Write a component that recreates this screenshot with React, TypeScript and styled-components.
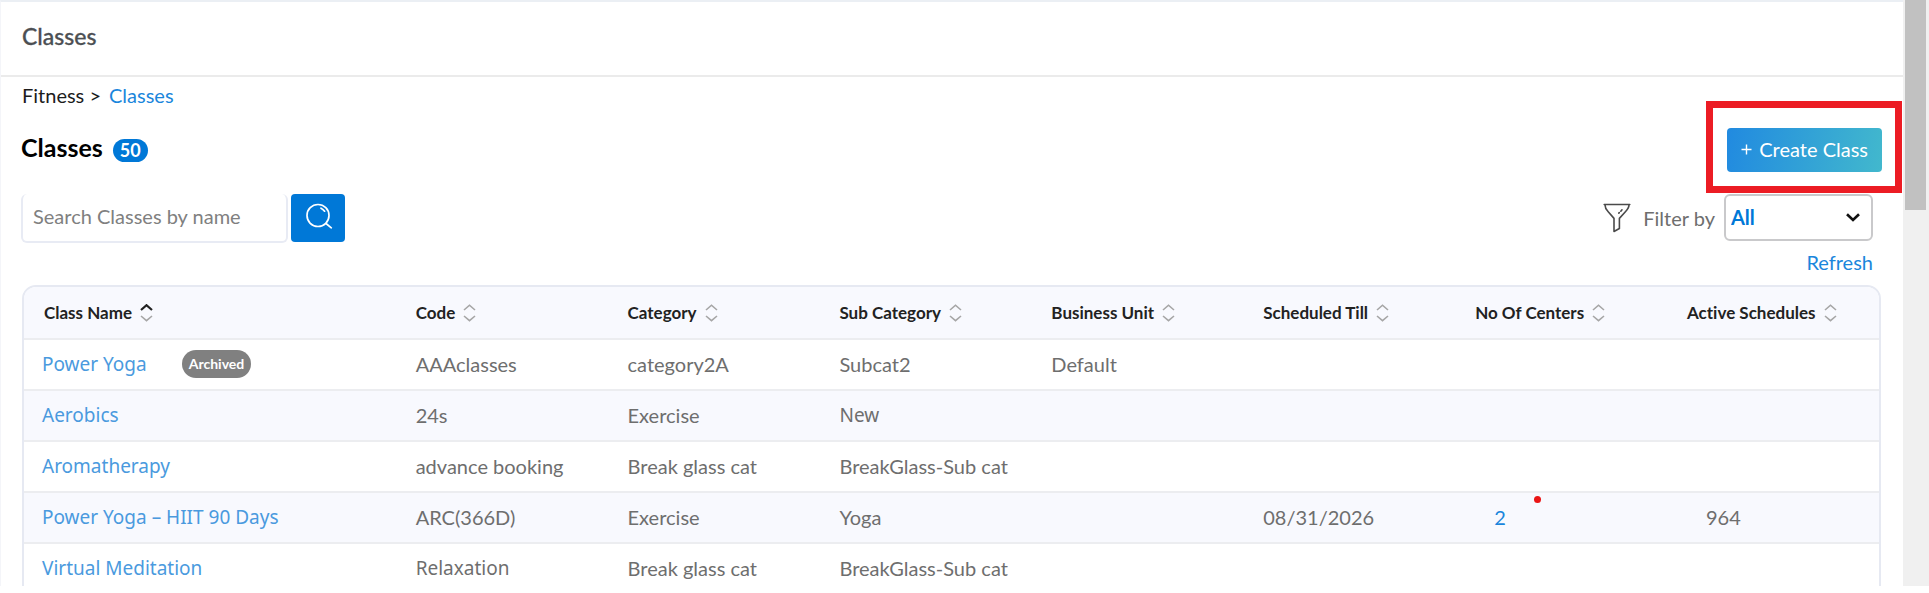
import React from "react";
import styled, { createGlobalStyle, css } from "styled-components";

const blue = "#0078d7";
const linkBlue = "#1a86dc";
const nameBlue = "#4a9ade";
const line = "#ecedf0";
const tint = "#f8f9fe";

const GlobalStyle = createGlobalStyle`
  *, *::before, *::after { box-sizing: border-box; }
  body {
    margin: 0;
    background: #fff;
    color: #6e6e6e;
    font: 20px/24px Lato, "Liberation Sans", sans-serif;
    font-variant-ligatures: none;
    overflow: hidden;
  }
  h1, p { margin: 0; }
  a { color: ${linkBlue}; text-decoration: none; }
  button, input, select { font: inherit; font-variant-ligatures: none; margin: 0; }
`;

const Shell = styled.div`
  display: flex;
  height: calc(100vh - 7px);
  overflow: hidden;
`;

const Main = styled.main`
  flex: 1;
  min-width: 0;
  border-top: 2px solid #ebeff4;
  border-left: 1px solid #f4f5f9;
`;

const ScrollTrack = styled.div`
  width: 26px;
  padding: 0 3px 0 2px;
  background: #f0f0f0;
`;

const ScrollThumb = styled.div`
  height: 210px;
  background: #c1c1c1;
`;

const TopBar = styled.header`
  display: flex;
  align-items: center;
  height: 75px;
  padding: 0 21px 6px;
  border-bottom: 2px solid #ebebeb;
`;

const TopTitle = styled.p`
  color: #4c4f53;
  font-size: 23px;
  font-weight: 500;
  -webkit-text-stroke: 0.3px currentColor;
`;

const Content = styled.div`
  padding: 6px 27px 0 20px;
`;

const Breadcrumb = styled.nav`
  display: flex;
  gap: 8px;
  padding-left: 1px;
  color: #1c1c1c;
`;

const TitleRow = styled.div`
  display: flex;
  align-items: center;
  justify-content: space-between;
  margin-top: 21px;
  height: 44px;
`;

const TitleGroup = styled.div`
  display: flex;
  align-items: center;
  gap: 10px;
  padding-bottom: 6px;
`;

const Title = styled.h1`
  color: #000;
  font-size: 25px;
  font-weight: 700;
  line-height: 30px;
`;

const Count = styled.span`
  height: 23px;
  margin-top: 6px;
  padding: 0 7px;
  border-radius: 12px;
  background: ${blue};
  color: #fff;
  font-size: 18px;
  font-weight: 700;
  line-height: 23px;
`;

const Highlight = styled.div`
  position: relative;
  margin-right: -6px;

  &::after {
    content: "";
    position: absolute;
    inset: -27px -20px -21px -21px;
    border: 7px solid #ec1c24;
    pointer-events: none;
  }
`;

const CreateButton = styled.button`
  display: flex;
  align-items: center;
  gap: 7px;
  height: 44px;
  padding: 0 14px 2px;
  border: 0;
  border-radius: 4px;
  background: linear-gradient(100deg, #218ae0, #42b8cd);
  color: #fff;
`;

const Tools = styled.div`
  display: flex;
  align-items: flex-start;
  justify-content: space-between;
  margin-top: 22px;
`;

const SearchForm = styled.form`
  display: flex;
  gap: 3px;
`;

const SearchInput = styled.input`
  width: 267px;
  height: 49px;
  padding: 0 10px 4px;
  border: 2px solid #e8ebf4;
  border-top: 0;
  border-radius: 6px;
  background: #fff;
  outline: 0;

  &::placeholder { color: #808080; opacity: 1; }
`;

const SearchButton = styled.button`
  display: grid;
  place-items: center;
  width: 54px;
  height: 48px;
  padding: 0 0 2px 2px;
  border: 0;
  border-radius: 4px;
  background: ${blue};
`;

const FilterLabel = styled.label`
  display: flex;
  align-items: center;
  gap: 9px;
  margin: 0 3px 0 0;
`;

const FilterIcon = styled.svg`
  margin-right: 3px;
`;

const SelectBox = styled.span`
  display: grid;
  align-items: center;

  > * { grid-area: 1 / 1; }
  > svg { justify-self: end; margin-right: 13px; pointer-events: none; }
`;

const Select = styled.select`
  appearance: none;
  width: 149px;
  height: 47px;
  padding: 0 5px 1px;
  border: 2px solid #c9c9cb;
  border-radius: 6px;
  background: #fff;
  color: ${blue};
  font-weight: 700;
`;

const RefreshRow = styled.div`
  display: flex;
  justify-content: flex-end;
  margin: 7px 3px 11px 0;
`;

const TableFrame = styled.div`
  margin: 0 -5px 0 1px;
  border: 2px solid #e6e9f2;
  border-radius: 14px 14px 0 0;
  overflow: hidden;
`;

const Table = styled.table`
  width: 100%;
  table-layout: fixed;
  border-collapse: separate;
  border-spacing: 0;
`;

const cell = css`
  padding: 0 0 2px 20px;
  border-bottom: 2px solid ${line};
  text-align: left;
  white-space: nowrap;
`;

const HeadCell = styled.th<{ $share: string }>`
  ${cell}
  width: ${(p) => p.$share};
  height: 53px;
  padding-bottom: 0;
  background: ${tint};
  color: #222;
  font-size: 17px;
  font-weight: 700;
`;

const SortButton = styled.button`
  display: flex;
  align-items: center;
  gap: 8px;
  padding: 0;
  border: 0;
  background: none;
  color: inherit;
`;

const Row = styled.tr`
  height: 51px;

  &:nth-child(even) { background: ${tint}; }
`;

const Cell = styled.td<{ $indent?: boolean }>`
  ${cell}
  padding-left: ${(p) => (p.$indent ? "39px" : "20px")};
`;

const NameCell = styled.td`
  ${cell}
  padding-left: 18px;
`;

const NameLine = styled.div`
  display: flex;
  align-items: center;
  gap: 35px;
`;

const NameLink = styled.a`
  color: ${nameBlue};
  font: 19px/24px "Noto Sans", sans-serif;
`;

const AltText = styled.span`
  font: 19px/24px "Noto Sans", sans-serif;
`;

const Archived = styled.span`
  height: 28px;
  padding: 0 7px;
  border-radius: 14px;
  background: #808080;
  color: #fff;
  font-size: 14px;
  font-weight: 700;
  line-height: 28px;
`;

const Marked = styled.span`
  position: relative;

  &::after {
    content: "";
    position: absolute;
    left: 40px;
    top: -9px;
    width: 7px;
    height: 7px;
    border-radius: 50%;
    background: #ea1515;
  }
`;

const SortIcon = ({ up }: { up?: boolean }) => (
  <svg width="13" height="18" viewBox="0 0 13 18" fill="none" strokeWidth="1.6" aria-hidden="true">
    <path d="M1 6 6.5 1.2 12 6" stroke={up ? "#222" : "#a6a6a6"} strokeWidth={up ? 2.2 : 1.6} />
    <path d="M1 12 6.5 16.6 12 12" stroke="#a6a6a6" />
  </svg>
);

const columns = [
  "Class Name", "Code", "Category", "Sub Category",
  "Business Unit", "Scheduled Till", "No Of Centers", "Active Schedules",
];

type ClassRow = {
  name: string;
  archived?: boolean;
  code: React.ReactNode;
  category: string;
  sub: React.ReactNode;
  unit?: string;
  till?: string;
  centers?: number;
  active?: number;
};

const rows: ClassRow[] = [
  { name: "Power Yoga", archived: true, code: "AAAclasses", category: "category2A", sub: "Subcat2", unit: "Default" },
  { name: "Aerobics", code: "24s", category: "Exercise", sub: <AltText>New</AltText> },
  { name: "Aromatherapy", code: "advance booking", category: "Break glass cat", sub: "BreakGlass-Sub cat" },
  { name: "Power Yoga – HIIT 90 Days", code: "ARC(366D)", category: "Exercise", sub: "Yoga", till: "08/31/2026", centers: 2, active: 964 },
  { name: "Virtual Meditation", code: <AltText>Relaxation</AltText>, category: "Break glass cat", sub: "BreakGlass-Sub cat" },
];

export default function App() {
  return (
    <>
      <GlobalStyle />
      <Shell>
        <Main>
          <TopBar><TopTitle>Classes</TopTitle></TopBar>
          <Content>
            <Breadcrumb aria-label="Breadcrumb">
              <span>Fitness &gt;</span>
              <a href="#classes">Classes</a>
            </Breadcrumb>
            <TitleRow>
              <TitleGroup>
                <Title>Classes</Title>
                <Count>50</Count>
              </TitleGroup>
              <Highlight>
                <CreateButton type="button">
                  <svg width="11" height="11" viewBox="0 0 11 11" stroke="#fff" strokeWidth="1.4" aria-hidden="true">
                    <path d="M5.5 0.5v10M0.5 5.5h10" />
                  </svg>
                  Create Class
                </CreateButton>
              </Highlight>
            </TitleRow>
            <Tools>
              <SearchForm onSubmit={(e) => e.preventDefault()}>
                <SearchInput type="text" aria-label="Search Classes by name" placeholder="Search Classes by name" />
                <SearchButton type="submit" aria-label="Search">
                  <svg width="28" height="28" viewBox="0 0 28 28" fill="none" stroke="#fff" strokeWidth="1.7" strokeLinecap="round" aria-hidden="true">
                    <circle cx="13" cy="12.5" r="11" />
                    <path d="M21 20.5 26.3 24.8M16 5.2a9 9 0 0 1 3.6 3" />
                  </svg>
                </SearchButton>
              </SearchForm>
              <FilterLabel>
                <FilterIcon width="28" height="30" viewBox="0 0 28 30" fill="none" stroke="#4a4a4a" strokeWidth="1.6" strokeLinejoin="round" strokeLinecap="round" aria-hidden="true">
                  <path d="M1.2 1.5h25.6M2 2c0 3 1.5 5 3.2 6.8L11 15.4V28.5l5.4-3V15.4l6-6.6C24.5 6.5 26 4.5 26 2" />
                  <path d="M19 6.8l-1.2 1.4M16.3 9.6l-.5.5" />
                </FilterIcon>
                Filter by
                <SelectBox>
                  <Select defaultValue="All">
                    <option>All</option>
                    <option>Active</option>
                    <option>Archived</option>
                  </Select>
                  <svg width="14" height="9" viewBox="0 0 14 9" fill="none" stroke="#111" strokeWidth="2.6" aria-hidden="true">
                    <path d="M1 1.2 7 7 13 1.2" />
                  </svg>
                </SelectBox>
              </FilterLabel>
            </Tools>
            <RefreshRow><a href="#refresh">Refresh</a></RefreshRow>
            <TableFrame>
              <Table>
                <thead>
                  <tr>
                    {columns.map((c, i) => (
                      <HeadCell key={c} scope="col" $share={i ? "11.46%" : "20.1%"}>
                        <SortButton type="button">{c}<SortIcon up={i === 0} /></SortButton>
                      </HeadCell>
                    ))}
                  </tr>
                </thead>
                <tbody>
                  {rows.map((r) => (
                    <Row key={r.name}>
                      <NameCell>
                        <NameLine>
                          <NameLink href="#class">{r.name}</NameLink>
                          {r.archived && <Archived>Archived</Archived>}
                        </NameLine>
                      </NameCell>
                      <Cell>{r.code}</Cell>
                      <Cell>{r.category}</Cell>
                      <Cell>{r.sub}</Cell>
                      <Cell>{r.unit}</Cell>
                      <Cell>{r.till}</Cell>
                      <Cell $indent>{r.centers && <Marked><a href="#centers">{r.centers}</a></Marked>}</Cell>
                      <Cell $indent>{r.active}</Cell>
                    </Row>
                  ))}
                </tbody>
              </Table>
            </TableFrame>
          </Content>
        </Main>
        <ScrollTrack aria-hidden="true"><ScrollThumb /></ScrollTrack>
      </Shell>
    </>
  );
}
